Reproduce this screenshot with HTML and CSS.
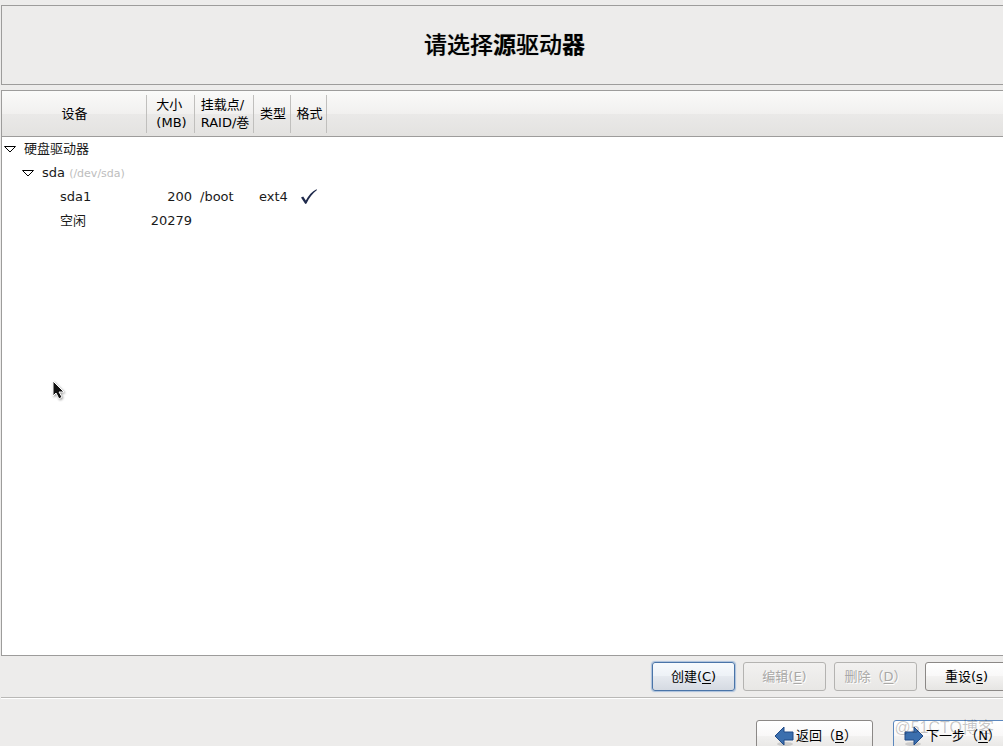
FILE: index.html
```html
<!DOCTYPE html>
<html lang="zh-CN">
<head>
<meta charset="utf-8">
<title>请选择源驱动器</title>
<link rel="stylesheet" href="styles.css">
</head>
<body>
<main class="installer">
  <header class="banner">
    <h1 class="banner-title">请选择<b>源</b>驱动<b>器</b></h1>
  </header>

  <section class="device-list">
    <table class="devices">
      <colgroup>
        <col class="col-device"><col class="col-size"><col class="col-mount"><col class="col-type"><col class="col-format"><col>
      </colgroup>
      <thead>
        <tr>
          <th scope="col">设备</th>
          <th scope="col"><span class="head-lines">大小<br>(MB)</span></th>
          <th scope="col"><span class="head-lines">挂载点/<br>RAID/巻</span></th>
          <th scope="col">类型</th>
          <th scope="col">格式</th>
          <td></td>
        </tr>
      </thead>
      <tbody>
        <tr>
          <td class="level-1"><svg class="expander" viewBox="0 0 12 8"><path d="M0.500 1.500H11.500L6 7Z"/></svg>硬盘驱动器</td>
          <td></td><td></td><td></td><td></td><td></td>
        </tr>
        <tr>
          <td class="level-2"><svg class="expander" viewBox="0 0 12 8"><path d="M0.500 1.500H11.500L6 7Z"/></svg>sda <small class="path">(/dev/sda)</small></td>
          <td></td><td></td><td></td><td></td><td></td>
        </tr>
        <tr>
          <td class="level-3">sda1</td>
          <td class="size">200</td>
          <td class="mount">/boot</td>
          <td class="type">ext4</td>
          <td class="format"><svg class="tick" viewBox="0 0 16 16" role="img" aria-label="格式化"><path d="M0 8.5L2.2 7.6L4.8 11.6C7.500 6.500 11 2.500 15.500 0.300L16 1C11.500 4.500 8 9 5.500 14.500L4.300 15Z"/></svg></td>
          <td></td>
        </tr>
        <tr>
          <td class="level-3">空闲</td>
          <td class="size">20279</td>
          <td></td><td></td><td></td><td></td>
        </tr>
      </tbody>
    </table>
    <svg class="pointer" viewBox="0 0 14 20" aria-hidden="true"><path d="M1 1V16L4 13L7 19L10 17L7 12H12Z"/></svg>
  </section>

  <div class="actions">
    <button type="button" class="btn focused">创建(<u>C</u>)</button>
    <button type="button" class="btn" disabled>编辑(<u>E</u>)</button>
    <button type="button" class="btn" disabled>删除（<u>D</u>）</button>
    <button type="button" class="btn">重设(<u>s</u>)</button>
  </div>

  <footer class="nav">
    <button type="button" class="btn nav-btn"><svg class="arrow" viewBox="0 0 20 20"><ellipse class="shade" cx="11" cy="18" rx="8" ry="2"/><path d="M1 10L10 1V6H19V14H10V19Z"/></svg>返回（<u>B</u>）</button>
    <button type="button" class="btn nav-btn next"><svg class="arrow" viewBox="0 0 20 20"><ellipse class="shade" cx="9" cy="18" rx="8" ry="2"/><path d="M19 10L10 1V6H1V14H10V19Z"/></svg>下一步（<u>N</u>）</button>
    <span class="watermark">@51CTO博客</span>
  </footer>
</main>
</body>
</html>
```
FILE: styles.css
```css
* {
  box-sizing: border-box;
}

body {
  margin: 0;
  overflow: hidden;
  background: #edeceb;
  color: #1a1a1a;
  font: 13px/18px "DejaVu Sans", "Noto Sans CJK SC", sans-serif;
}

.installer {
  display: flex;
  flex-direction: column;
  height: 100vh;
  padding: 5px 0 0 1px;
  overflow: hidden;
}

.banner {
  display: flex;
  justify-content: center;
  align-items: center;
  height: 80px;
  padding: 0 0 4px 4px;
  border: 1px solid #9d9c9b;
  border-right: 0;
}

.banner-title {
  margin: 0;
  color: #000;
  font: 500 23px/32px "Noto Sans CJK SC", sans-serif;
  text-shadow: 0 0 1px #0006;
}

.banner-title b {
  font-weight: 700;
}

.device-list {
  position: relative;
  flex: 1;
  margin-top: 5px;
  border: 1px solid #9d9c9b;
  border-right: 0;
  background: #fff;
}

.devices {
  width: 100%;
  table-layout: fixed;
  border-collapse: separate;
  border-spacing: 0;
}

.col-device { width: 145px; }
.col-size { width: 48px; }
.col-mount { width: 59px; }
.col-type { width: 37px; }
.col-format { width: 36px; }

.devices th,
.devices td {
  padding: 0;
  white-space: nowrap;
}

.devices thead tr {
  background: linear-gradient(#fafaf9, #f1f0ef 50%, #eae9e8 50%, #e3e2e0);
}

.devices thead th,
.devices thead td {
  height: 46px;
  border-bottom: 1px solid #9d9c9b;
  color: #000;
  font-weight: 400;
}

.devices thead th {
  background: linear-gradient(#c0bfbd, #c0bfbd) right 4px / 1px 38px no-repeat;
}

.devices thead th + th {
  padding-left: 1px;
}

.head-lines {
  display: inline-block;
  text-align: left;
}

.devices tbody td {
  height: 24px;
}

.devices .level-1 { padding-left: 2px; }
.devices .level-2 { padding-left: 20px; }
.devices .level-3 { padding-left: 58px; }
.devices .size { padding-right: 3px; text-align: right; }
.devices .mount { padding-left: 5px; }
.devices .type { padding-left: 5px; }
.devices .format { text-align: center; }

.expander {
  width: 12px;
  height: 8px;
  margin-right: 8px;
  fill: #fff;
  stroke: #000;
}

.path {
  color: #bdbdbd;
  font-size: 11px;
}

.tick {
  display: block;
  width: 16px;
  height: 16px;
  margin: 0 auto;
  fill: #1f2a4c;
}

.pointer {
  position: absolute;
  top: 289px;
  left: 50px;
  width: 14px;
  height: 20px;
  fill: #111;
  stroke: #fff;
  filter: drop-shadow(1px 1px 1px #0006);
}

.actions {
  display: flex;
  justify-content: flex-end;
  gap: 8px;
  margin-right: -5px;
  padding: 6px 0;
  border-bottom: 1px solid #b9b8b6;
  box-shadow: 0 1px #fff;
}

.btn {
  display: flex;
  justify-content: center;
  align-items: center;
  flex: none;
  width: 83px;
  height: 29px;
  padding: 0;
  border: 1px solid #8b8886;
  border-radius: 3px;
  background: linear-gradient(#fff, #f9f8f8 50%, #f3f2f1 50%, #e6e5e3);
  color: #000;
  font: inherit;
  white-space: nowrap;
}

.btn u {
  text-underline-offset: 2px;
}

.btn.focused {
  border-color: #4a74a8;
  background: linear-gradient(#f7fafd, #edf1f6 50%, #e5e9ef 50%, #d5dae2);
  box-shadow: 0 0 1px 1px #a9c0dc;
}

.btn:disabled {
  border-color: #b4b3b1;
  background: linear-gradient(#f2f1f0, #e8e7e5);
  color: #a9a8a6;
  text-shadow: 1px 1px #fff;
}

.nav {
  position: relative;
  display: flex;
  justify-content: flex-end;
  gap: 20px;
  margin: 22px -7px -5px 0;
}

.nav-btn {
  width: 117px;
  height: 31px;
  padding-left: 2px;
}

.nav-btn.next {
  border-color: #5b87bd;
}

.arrow {
  width: 20px;
  height: 20px;
  margin-right: 2px;
  fill: #3b6fae;
  stroke: #204a87;
}

.arrow .shade {
  fill: #0002;
  stroke: none;
}

.watermark {
  position: absolute;
  top: -4px;
  right: 16px;
  color: #00000038;
  font: 16px/24px "Liberation Sans", "Noto Sans CJK SC", sans-serif;
  pointer-events: none;
}
```
